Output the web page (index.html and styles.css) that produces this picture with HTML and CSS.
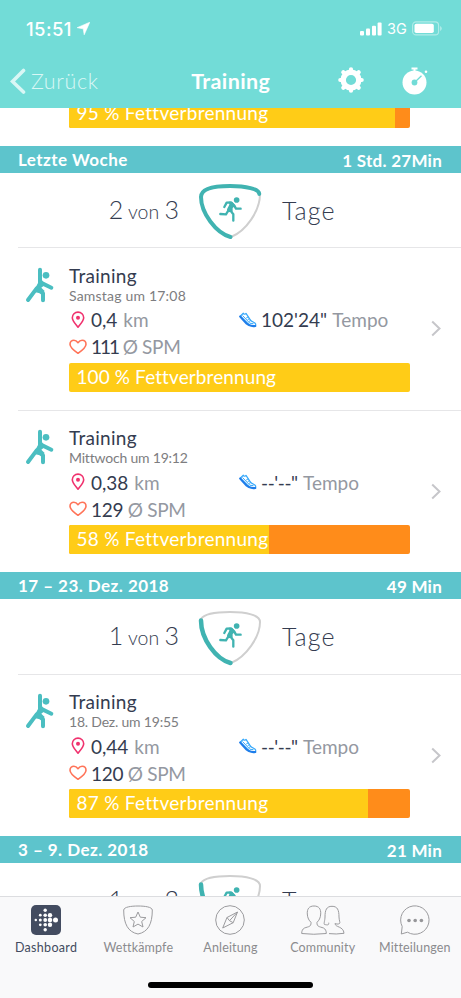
FILE: index.html
```
<!DOCTYPE html>
<html lang="de">
<head>
<meta charset="utf-8">
<title>Training</title>
<link rel="stylesheet" href="styles.css">
</head>
<body>
<svg class="defs" width="0" height="0">
  <symbol id="stretch" viewBox="75 50 90 110">
    <g fill="none" stroke="#4bbec1" stroke-linecap="round" stroke-linejoin="round">
      <path stroke-width="12" d="M120 58V98M121 96L154 112M110 114L84 149M113 116L129 129V150"/>
    </g>
    <path d="M115 84L126 89L134 104L124 112L134 122L126 130L100 124L114 98Z" fill="#4bbec1"/>
    <circle cx="138" cy="75" r="10" fill="#4bbec1"/>
  </symbol>
  <symbol id="runner" viewBox="114 172 76 80">
    <g fill="none" stroke="#40b3b1" stroke-linecap="round" stroke-linejoin="round">
      <path stroke-width="7" d="M133 204L140 191L153 190L163 200L168 209H182M149 212L160 226V245M144 216L138 226L121 225"/>
    </g>
    <path d="M147 188L158 190L166 200L158 207L158 218L143 220L141 211L148 197Z" fill="#40b3b1"/>
    <circle cx="170" cy="183" r="8.500" fill="#40b3b1"/>
  </symbol>
  <symbol id="pin" viewBox="0 0 14 18">
    <path d="M7 16.200C4 12.500 1.300 9.800 1.300 6.800A5.700 5.700 0 0 1 12.700 6.800C12.700 9.800 10 12.500 7 16.200Z" fill="none" stroke="#f0326e" stroke-width="1.600" stroke-linejoin="round"/>
    <circle cx="7" cy="6.800" r="2" fill="#f0326e"/>
  </symbol>
  <symbol id="heart" viewBox="0 0 18 16">
    <path d="M9 14.300C5 11.500 1 8.500 1 5.200C1 2.800 2.700 1.200 4.900 1.200C6.800 1.200 8 2.300 9 3.700C10 2.300 11.200 1.200 13.100 1.200C15.300 1.200 17 2.800 17 5.200C17 8.500 13 11.500 9 14.300Z" fill="none" stroke="#ff7459" stroke-width="1.600" stroke-linejoin="round"/>
  </symbol>
  <symbol id="shoe" viewBox="0 0 18 16">
    <path d="M1.200 4.200L4.300 1.200C5.200 2.700 6.300 2 7 1.300L11.300 7.800C12.500 9.700 15.500 10.300 16.500 11.800C17 13 16.500 14 15.300 14C12.500 14.200 11 13.500 9.400 12Z" fill="none" stroke="#35a8fb" stroke-width="1.200" stroke-linejoin="round"/>
    <path d="M1.200 4.500L7.500 11.500C10 13.900 12.500 14.600 16.300 14" fill="none" stroke="#1e7dea" stroke-width="2.100" stroke-linecap="round"/>
    <path d="M3.500 3.500L10.800 11.200L14.500 11.700M7.200 6L9.300 4.800M8.600 7.700L10.700 6.500M9.900 9.400L12 8.400" fill="none" stroke="#35a8fb"/>
  </symbol>
  <symbol id="chevron" viewBox="0 0 10 17">
    <path d="M1.200 1.500L8.500 8.500L1.200 15.500" fill="none" stroke="#c6c6ca" stroke-width="2"/>
  </symbol>
</svg>

<div class="screen">
  <header class="top">
    <div class="status">
      <span class="clock">15:51</span>
      <svg class="locate" viewBox="0 0 13 13"><path d="M12.800 .2L7.200 12.800L6.200 6.800L.1 5.700Z" fill="#fff" stroke="#fff" stroke-width=".6" stroke-linejoin="round"/></svg>
      <svg class="signal" viewBox="0 0 22 14" fill="#fff"><rect y="9" width="4" height="4.500" rx="1"/><rect x="6" y="6.500" width="4" height="7" rx="1"/><rect x="12" y="3.700" width="4" height="9.800" rx="1"/><rect x="17.600" y=".5" width="4" height="13" rx="1"/></svg>
      <span class="network">3G</span>
      <svg class="battery" viewBox="0 0 30 15"><rect x=".6" y=".9" width="26" height="13" rx="3.500" fill="none" stroke="#fff" stroke-opacity=".45" stroke-width="1.100"/><rect x="2.500" y="2.800" width="19.300" height="9.200" rx="1.800" fill="#fff"/><path d="M28.200 5v5q1.500-.7 1.500-2.500t-1.500-2.500" fill="#fff" fill-opacity=".5"/></svg>
    </div>
    <nav class="nav">
      <a class="back"><svg viewBox="0 0 16 27"><path d="M13.500 2.500L2.500 13.500L13.500 24" fill="none" stroke="currentColor" stroke-width="3.600" stroke-linecap="round" stroke-linejoin="miter"/></svg><span>Zurück</span></a>
      <h1>Training</h1>
      <div class="actions">
        <svg class="gear" viewBox="-13 -13 26 26"><circle r="7.800" fill="none" stroke="#fff" stroke-width="5.400"/><g stroke="#fff" stroke-width="4.200" stroke-linecap="round"><path d="M0-9V-10.700M0 9V10.700M-9 0H-10.700M9 0H10.700M-6.400-6.400L-7.700-7.700M6.400 6.400L7.700 7.700M-6.400 6.400L-7.700 7.700M6.400-6.400L7.700-7.700"/></g></svg>
        <svg class="watch" viewBox="0 0 26 28"><circle cx="12.500" cy="15.500" r="12" fill="#fff"/><path d="M9.500 1.500H15.500M12.500 1V5" stroke="#fff" stroke-width="2"/><circle cx="24" cy="4.700" r="1.300" fill="#fff"/><circle cx="12.500" cy="15.500" r="2.900" fill="#72dcd7"/><path d="M12.500 15.500L19.500 8.700" stroke="#72dcd7" stroke-width="1.300"/></svg>
      </div>
    </nav>
  </header>

  <main class="list">
    <div class="bar cut"><div class="burn b95">95 % Fettverbrennung</div></div>

    <section>
      <div class="week"><span>Letzte Woche</span><span class="total">1 Std. 27Min</span></div>
      <div class="summary">
        <div class="count"><b>2</b> von <b>3</b></div>
        <div class="shield">
          <svg viewBox="198 184 64 57" fill="none" stroke-linecap="round"><path d="M260 195C260 212 246 232 231 238" stroke="#cfcfcf" stroke-width="2"/><path d="M230.500 238C216 234 201 214 201 198C201 189 216 187 230 187C246 187 259 190 259.300 195" stroke="#40b3b1" stroke-width="4"/><use href="#runner" x="218" y="197.300" width="25.300" height="26.700"/></svg>
        </div>
        <div class="days">Tage</div>
      </div>
      <article class="item">
        <svg class="figure"><use href="#stretch"/></svg>
        <div class="body">
          <h2>Training</h2>
          <p class="date">Samstag um 17:08</p>
          <div class="stats">
            <div class="stat"><svg class="pin"><use href="#pin"/></svg><b>0,4</b> km</div>
            <div class="stat pace"><svg class="shoe"><use href="#shoe"/></svg><b>102'24"</b> Tempo</div>
            <div class="stat beat"><svg class="heart"><use href="#heart"/></svg><b class="narrow">111</b> Ø SPM</div>
          </div>
          <div class="bar"><div class="burn b100">100 % Fettverbrennung</div></div>
        </div>
        <svg class="chevron"><use href="#chevron"/></svg>
      </article>
      <article class="item">
        <svg class="figure"><use href="#stretch"/></svg>
        <div class="body">
          <h2>Training</h2>
          <p class="date mid">Mittwoch um 19:12</p>
          <div class="stats">
            <div class="stat"><svg class="pin"><use href="#pin"/></svg><b>0,38</b> km</div>
            <div class="stat pace"><svg class="shoe"><use href="#shoe"/></svg><b class="none">--'--"</b> Tempo</div>
            <div class="stat beat"><svg class="heart"><use href="#heart"/></svg><b>129</b> Ø SPM</div>
          </div>
          <div class="bar"><div class="burn b58">58 % Fettverbrennung</div></div>
        </div>
        <svg class="chevron"><use href="#chevron"/></svg>
      </article>
    </section>

    <section>
      <div class="week"><span>17 – 23. Dez. 2018</span><span class="total">49 Min</span></div>
      <div class="summary">
        <div class="count"><b>1</b> von <b>3</b></div>
        <div class="shield">
          <svg viewBox="198 184 64 57" fill="none" stroke-linecap="round"><path d="M201 194C204 189 216 187 230 187C246 187 260 190 260 197C260 212 246 232 231 238" stroke="#cfcfcf" stroke-width="2"/><path d="M230.500 238C216 234 201 214 201 195.500" stroke="#40b3b1" stroke-width="4.500"/><use href="#runner" x="218" y="197.300" width="25.300" height="26.700"/></svg>
        </div>
        <div class="days">Tage</div>
      </div>
      <article class="item">
        <svg class="figure"><use href="#stretch"/></svg>
        <div class="body">
          <h2>Training</h2>
          <p class="date mid">18. Dez. um 19:55</p>
          <div class="stats">
            <div class="stat"><svg class="pin"><use href="#pin"/></svg><b>0,44</b> km</div>
            <div class="stat pace"><svg class="shoe"><use href="#shoe"/></svg><b class="none">--'--"</b> Tempo</div>
            <div class="stat beat"><svg class="heart"><use href="#heart"/></svg><b>120</b> Ø SPM</div>
          </div>
          <div class="bar"><div class="burn b87">87 % Fettverbrennung</div></div>
        </div>
        <svg class="chevron"><use href="#chevron"/></svg>
      </article>
    </section>

    <section>
      <div class="week"><span>3 – 9. Dez. 2018</span><span class="total">21 Min</span></div>
      <div class="summary">
        <div class="count"><b>1</b> von <b>3</b></div>
        <div class="shield">
          <svg viewBox="198 184 64 57" fill="none" stroke-linecap="round"><path d="M201 194C204 189 216 187 230 187C246 187 260 190 260 197C260 212 246 232 231 238" stroke="#cfcfcf" stroke-width="2"/><path d="M230.500 238C216 234 201 214 201 195.500" stroke="#40b3b1" stroke-width="4.500"/><use href="#runner" x="218" y="197.300" width="25.300" height="26.700"/></svg>
        </div>
        <div class="days">Tage</div>
      </div>
    </section>
  </main>

  <footer class="tabs">
    <a class="tab active">
      <svg viewBox="0 0 30 30"><rect width="30" height="30" rx="5" fill="#434c60"/><g fill="#fff"><circle cx="4.800" cy="15" r="1.200"/><circle cx="9.300" cy="10.200" r="1.400"/><circle cx="9.300" cy="15" r="1.500"/><circle cx="9.300" cy="19.800" r="1.400"/><circle cx="14.200" cy="5.200" r="1.700"/><circle cx="14.200" cy="10.200" r="1.800"/><circle cx="14.200" cy="15" r="1.900"/><circle cx="14.200" cy="19.800" r="1.800"/><circle cx="14.200" cy="24.800" r="1.700"/><circle cx="19" cy="10.200" r="2.200"/><circle cx="19" cy="15" r="2.300"/><circle cx="19" cy="19.800" r="2.200"/><circle cx="24.500" cy="15" r="2.500"/></g></svg>
      <span>Dashboard</span>
    </a>
    <a class="tab">
      <svg viewBox="0 0 30 30"><path d="M15 29C5 27 .7 19 .7 5C1 2 8 1 15 1S29 2 29.300 5C29.300 19 25 27 15 29Z"/><path d="M15 7L17.300 12.200L23 12.700L18.700 16.500L20 22L15 19.100L10 22L11.300 16.500L7 12.700L12.700 12.200Z"/></svg>
      <span>Wettkämpfe</span>
    </a>
    <a class="tab">
      <svg viewBox="0 0 30 30"><circle cx="15" cy="15" r="14.300"/><path d="M22.500 7L18.200 17.700L7.700 23L12 12.500ZM12 12.500L14.500 15.700L18.200 17.700M14.500 15.700L22.500 7"/></svg>
      <span>Anleitung</span>
    </a>
    <a class="tab">
      <svg class="people" viewBox="0 0 44 30"><path d="M13 1C8 1 6 4 6.300 9C6.500 13 8 15.500 10 17.300C10.300 22 7.500 21.500 3.500 23C1.500 24 .7 26 .7 28.500Q12.500 30 25.300 28.500C25.300 26 24.500 24 22.500 23C18.500 21.500 15.700 22 16 17.300C18 15.500 19.500 13 19.700 9C20 4 18 1 13 1Z"/><path d="M27.700 17.700C28 20.500 26.500 20 23.500 19.500C22.500 19 24 15 24 12C24 5 25.500 1.300 31 1.300S38 5 38 12C38 15 39.500 18 38.500 18.500C37 19.500 35 19 34 18.500C34 22.500 42.500 21 43 28.300Q35 29.500 28 28.600"/></svg>
      <span>Community</span>
    </a>
    <a class="tab">
      <svg viewBox="0 0 30 30"><path d="M2.200 21.500A14.200 14.200 0 1 1 7.500 27.200L1.300 29Z"/><g fill="#969699" stroke="none"><circle cx="9" cy="15.500" r="1.800"/><circle cx="15.200" cy="15.500" r="1.800"/><circle cx="21.400" cy="15.500" r="1.800"/></g></svg>
      <span>Mitteilungen</span>
    </a>
    <div class="home"></div>
  </footer>
</div>
</body>
</html>
```
FILE: styles.css
```
* { box-sizing: border-box; }
body, h1, h2, p { margin: 0; font-weight: 400; }
body { background: #fff; font-family: Lato, "Liberation Sans", sans-serif; color: #343c50; }
svg { display: block; flex: none; }
.defs { position: absolute; }
.screen { width: 461px; height: 998px; overflow: hidden; display: flex; flex-direction: column; }

.top { flex: none; height: 108px; background: #72dcd7; color: #fff; }
.status { height: 55px; padding: 2px 19px 0 26px; display: flex; align-items: center; font-family: Inter, sans-serif; }
.clock { font-size: 18.500px; font-weight: 500; width: 51px; letter-spacing: .4px; }
.locate { width: 13px; height: 13px; }
.signal { width: 22px; height: 14px; margin-left: auto; }
.network { font-size: 14.500px; margin: 0 5px 0 5px; width: 20px; }
.battery { width: 30px; height: 15px; }
.nav { height: 53px; display: grid; grid-template-columns: 1fr auto 1fr; align-items: center; padding: 0 33.500px 1px 10px; }
.back { display: flex; align-items: center; gap: 5px; color: #d9f7f5; font-size: 21.500px; font-weight: 300; letter-spacing: .6px; }
.back svg { width: 16px; height: 27px; }
.nav h1 { font-size: 21.500px; font-weight: 700; letter-spacing: .4px; transform: translateX(12px); }
.actions { display: flex; justify-content: flex-end; gap: 38px; }
.gear { width: 26px; height: 26px; }
.watch { width: 26px; height: 28px; }

.list { flex: 1; min-height: 0; overflow: hidden; }
.bar { height: 29px; border-radius: 2px; background: #ff8c1a; overflow: hidden; }
.burn { height: 100%; background: #ffcc17; color: #fff; padding-left: 7.500px; font-size: 19px; line-height: 28px; letter-spacing: .27px; white-space: nowrap; }
.b58 { width: 58.700%; }
.b87 { width: 87.700%; }
.b95 { width: 95.800%; }
.b100 { width: 100%; letter-spacing: .1px; }
.bar.cut { width: 340.500px; margin: -9px 0 18px 69px; }

.week { height: 27px; background: #5dc4cc; color: #fff; display: flex; justify-content: space-between; align-items: center; padding: 0 19px 0 18px; font-size: 17px; font-weight: 700; letter-spacing: .45px; line-height: 26px; }
.total { padding-top: 2px; letter-spacing: .25px; }
.summary { height: 74.300px; display: grid; grid-template-columns: 179px 103px 1fr; align-items: center; }
.count { text-align: right; font-size: 19.500px; font-weight: 300; line-height: 30px; }
.count b, .days { font-size: 25px; font-weight: 300; }
.days { letter-spacing: 1.100px; line-height: 30px; padding-bottom: 1px; }
.shield svg { width: 64px; height: 57px; margin: 3px 0 0 19px; }

.item { height: 162.500px; display: grid; grid-template-columns: 69px 340.500px 1fr; border-top: 1px solid transparent; border-image: linear-gradient(to right, transparent 19px, #e6e6e8 19px) 1; }
.figure { width: 30px; height: 36.700px; margin: 18.500px 0 0 25px; }
.body { padding-top: 16.500px; }
.item h2 { font-size: 19px; line-height: 22px; letter-spacing: .3px; }
.date { font-size: 14px; line-height: 17px; color: #7d7d80; letter-spacing: .2px; }
.mid { letter-spacing: -.2px; }
.stats { display: grid; grid-template-columns: 170px 1fr; grid-auto-rows: 27px; margin: 2.500px 0; }
.stat { display: flex; align-items: center; font-size: 19px; color: #9498a1; white-space: pre; }
.stat b { font-weight: 400; color: #343c50; margin-right: 1px; }
.stat.beat b { margin-right: 0; }
.beat { letter-spacing: -.3px; }
.beat .narrow { letter-spacing: -2px; }
.none { letter-spacing: -.4px; }
.pin { width: 14px; height: 18px; margin: 0 6.500px 0 1.500px; }
.heart { width: 18px; height: 16px; margin-right: 4px; }
.shoe { width: 18px; height: 16px; margin-right: 4px; }
.chevron { width: 10px; height: 17px; margin: 72px 0 0 21.500px; }

.tabs { flex: none; height: 102.500px; background: #f9f9fa; border-top: 1px solid #dcdde0; display: grid; grid-template-columns: repeat(5, 1fr); position: relative; }
.tab { padding-top: 8px; display: flex; flex-direction: column; align-items: center; color: #8b8b8e; font-size: 12.500px; line-height: 16px; letter-spacing: .15px; }
.tab svg { width: 30px; height: 30px; margin-bottom: 5px; fill: none; stroke: #9b9b9e; stroke-width: 1; stroke-linejoin: round; }
.tab.active svg { stroke: none; }
.tab .people { width: 44px; }
.tab.active { color: #434c60; letter-spacing: .3px; }
.home { position: absolute; left: 148px; bottom: 10px; width: 165px; height: 6px; border-radius: 3px; background: #000; }
```
